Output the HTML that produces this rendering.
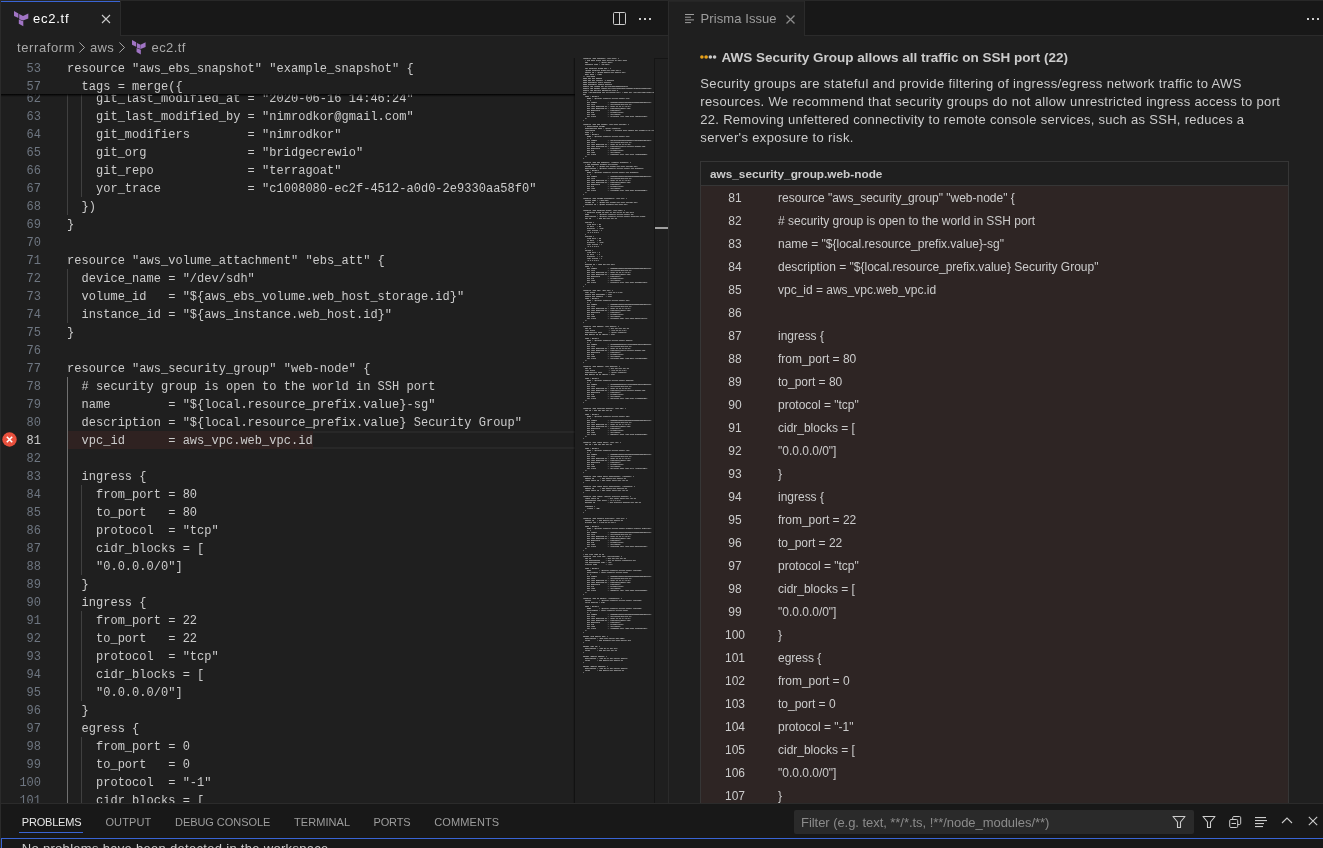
<!DOCTYPE html><html><head><meta charset="utf-8"><style>
*{box-sizing:border-box;margin:0;padding:0}
html,body{width:1323px;height:848px;overflow:hidden;background:#1f1f1f}
body{position:relative;font-family:'Liberation Sans', sans-serif;-webkit-font-smoothing:antialiased}
.a{position:absolute}
.ln{position:absolute;left:0;width:41px;text-align:right;font:12px/18px 'Liberation Mono', monospace;color:#6e7681;white-space:pre}
.cd{position:absolute;left:67.1px;font:12px/18px 'Liberation Mono', monospace;color:#cccccc;white-space:pre;letter-spacing:0.02px}
.ig{position:absolute;width:1px;background:#404040}
.tt{position:absolute;white-space:pre}
</style></head><body><div style="position:absolute;left:0;top:0;width:1323px;height:848px;will-change:transform">
<div class="a" style="left:0;top:58px;width:668px;height:745px;overflow:hidden;background:#1f1f1f">
<div class="a" style="left:67.5px;top:373px;width:507.5px;height:18px;border-top:2px solid #282828;border-bottom:2px solid #282828"></div>
<div class="a" style="left:67.5px;top:373px;width:245.5px;height:18px;background:#2f2221"></div>
<div class="ln" style="top:32px;color:#6e7681">62</div>
<div class="ig" style="left:67.0px;top:31px;height:18px;background:#404040"></div>
<div class="ig" style="left:81.4px;top:31px;height:18px;background:#404040"></div>
<div class="cd" style="top:32px">    git_last_modified_at = &quot;2020-06-16 14:46:24&quot;</div>
<div class="ln" style="top:50px;color:#6e7681">63</div>
<div class="ig" style="left:67.0px;top:49px;height:18px;background:#404040"></div>
<div class="ig" style="left:81.4px;top:49px;height:18px;background:#404040"></div>
<div class="cd" style="top:50px">    git_last_modified_by = &quot;nimrodkor@gmail.com&quot;</div>
<div class="ln" style="top:68px;color:#6e7681">64</div>
<div class="ig" style="left:67.0px;top:67px;height:18px;background:#404040"></div>
<div class="ig" style="left:81.4px;top:67px;height:18px;background:#404040"></div>
<div class="cd" style="top:68px">    git_modifiers        = &quot;nimrodkor&quot;</div>
<div class="ln" style="top:86px;color:#6e7681">65</div>
<div class="ig" style="left:67.0px;top:85px;height:18px;background:#404040"></div>
<div class="ig" style="left:81.4px;top:85px;height:18px;background:#404040"></div>
<div class="cd" style="top:86px">    git_org              = &quot;bridgecrewio&quot;</div>
<div class="ln" style="top:104px;color:#6e7681">66</div>
<div class="ig" style="left:67.0px;top:103px;height:18px;background:#404040"></div>
<div class="ig" style="left:81.4px;top:103px;height:18px;background:#404040"></div>
<div class="cd" style="top:104px">    git_repo             = &quot;terragoat&quot;</div>
<div class="ln" style="top:122px;color:#6e7681">67</div>
<div class="ig" style="left:67.0px;top:121px;height:18px;background:#404040"></div>
<div class="ig" style="left:81.4px;top:121px;height:18px;background:#404040"></div>
<div class="cd" style="top:122px">    yor_trace            = &quot;c1008080-ec2f-4512-a0d0-2e9330aa58f0&quot;</div>
<div class="ln" style="top:140px;color:#6e7681">68</div>
<div class="ig" style="left:67.0px;top:139px;height:18px;background:#404040"></div>
<div class="cd" style="top:140px">  })</div>
<div class="ln" style="top:158px;color:#6e7681">69</div>
<div class="cd" style="top:158px">}</div>
<div class="ln" style="top:176px;color:#6e7681">70</div>
<div class="cd" style="top:176px"></div>
<div class="ln" style="top:194px;color:#6e7681">71</div>
<div class="cd" style="top:194px">resource &quot;aws_volume_attachment&quot; &quot;ebs_att&quot; {</div>
<div class="ln" style="top:212px;color:#6e7681">72</div>
<div class="ig" style="left:67.0px;top:211px;height:18px;background:#404040"></div>
<div class="cd" style="top:212px">  device_name = &quot;/dev/sdh&quot;</div>
<div class="ln" style="top:230px;color:#6e7681">73</div>
<div class="ig" style="left:67.0px;top:229px;height:18px;background:#404040"></div>
<div class="cd" style="top:230px">  volume_id   = &quot;${aws_ebs_volume.web_host_storage.id}&quot;</div>
<div class="ln" style="top:248px;color:#6e7681">74</div>
<div class="ig" style="left:67.0px;top:247px;height:18px;background:#404040"></div>
<div class="cd" style="top:248px">  instance_id = &quot;${aws_instance.web_host.id}&quot;</div>
<div class="ln" style="top:266px;color:#6e7681">75</div>
<div class="cd" style="top:266px">}</div>
<div class="ln" style="top:284px;color:#6e7681">76</div>
<div class="cd" style="top:284px"></div>
<div class="ln" style="top:302px;color:#6e7681">77</div>
<div class="cd" style="top:302px">resource &quot;aws_security_group&quot; &quot;web-node&quot; {</div>
<div class="ln" style="top:320px;color:#6e7681">78</div>
<div class="ig" style="left:67.0px;top:319px;height:18px;background:#707070"></div>
<div class="cd" style="top:320px">  # security group is open to the world in SSH port</div>
<div class="ln" style="top:338px;color:#6e7681">79</div>
<div class="ig" style="left:67.0px;top:337px;height:18px;background:#707070"></div>
<div class="cd" style="top:338px">  name        = &quot;${local.resource_prefix.value}-sg&quot;</div>
<div class="ln" style="top:356px;color:#6e7681">80</div>
<div class="ig" style="left:67.0px;top:355px;height:18px;background:#707070"></div>
<div class="cd" style="top:356px">  description = &quot;${local.resource_prefix.value} Security Group&quot;</div>
<div class="ln" style="top:374px;color:#cccccc">81</div>
<div class="ig" style="left:67.0px;top:373px;height:18px;background:#707070"></div>
<div class="cd" style="top:374px">  vpc_id      = aws_vpc.web_vpc.id</div>
<div class="ln" style="top:392px;color:#6e7681">82</div>
<div class="ig" style="left:67.0px;top:391px;height:18px;background:#707070"></div>
<div class="cd" style="top:392px"></div>
<div class="ln" style="top:410px;color:#6e7681">83</div>
<div class="ig" style="left:67.0px;top:409px;height:18px;background:#707070"></div>
<div class="cd" style="top:410px">  ingress {</div>
<div class="ln" style="top:428px;color:#6e7681">84</div>
<div class="ig" style="left:67.0px;top:427px;height:18px;background:#707070"></div>
<div class="ig" style="left:81.4px;top:427px;height:18px;background:#404040"></div>
<div class="cd" style="top:428px">    from_port = 80</div>
<div class="ln" style="top:446px;color:#6e7681">85</div>
<div class="ig" style="left:67.0px;top:445px;height:18px;background:#707070"></div>
<div class="ig" style="left:81.4px;top:445px;height:18px;background:#404040"></div>
<div class="cd" style="top:446px">    to_port   = 80</div>
<div class="ln" style="top:464px;color:#6e7681">86</div>
<div class="ig" style="left:67.0px;top:463px;height:18px;background:#707070"></div>
<div class="ig" style="left:81.4px;top:463px;height:18px;background:#404040"></div>
<div class="cd" style="top:464px">    protocol  = &quot;tcp&quot;</div>
<div class="ln" style="top:482px;color:#6e7681">87</div>
<div class="ig" style="left:67.0px;top:481px;height:18px;background:#707070"></div>
<div class="ig" style="left:81.4px;top:481px;height:18px;background:#404040"></div>
<div class="cd" style="top:482px">    cidr_blocks = [</div>
<div class="ln" style="top:500px;color:#6e7681">88</div>
<div class="ig" style="left:67.0px;top:499px;height:18px;background:#707070"></div>
<div class="ig" style="left:81.4px;top:499px;height:18px;background:#404040"></div>
<div class="cd" style="top:500px">    &quot;0.0.0.0/0&quot;]</div>
<div class="ln" style="top:518px;color:#6e7681">89</div>
<div class="ig" style="left:67.0px;top:517px;height:18px;background:#707070"></div>
<div class="cd" style="top:518px">  }</div>
<div class="ln" style="top:536px;color:#6e7681">90</div>
<div class="ig" style="left:67.0px;top:535px;height:18px;background:#707070"></div>
<div class="cd" style="top:536px">  ingress {</div>
<div class="ln" style="top:554px;color:#6e7681">91</div>
<div class="ig" style="left:67.0px;top:553px;height:18px;background:#707070"></div>
<div class="ig" style="left:81.4px;top:553px;height:18px;background:#404040"></div>
<div class="cd" style="top:554px">    from_port = 22</div>
<div class="ln" style="top:572px;color:#6e7681">92</div>
<div class="ig" style="left:67.0px;top:571px;height:18px;background:#707070"></div>
<div class="ig" style="left:81.4px;top:571px;height:18px;background:#404040"></div>
<div class="cd" style="top:572px">    to_port   = 22</div>
<div class="ln" style="top:590px;color:#6e7681">93</div>
<div class="ig" style="left:67.0px;top:589px;height:18px;background:#707070"></div>
<div class="ig" style="left:81.4px;top:589px;height:18px;background:#404040"></div>
<div class="cd" style="top:590px">    protocol  = &quot;tcp&quot;</div>
<div class="ln" style="top:608px;color:#6e7681">94</div>
<div class="ig" style="left:67.0px;top:607px;height:18px;background:#707070"></div>
<div class="ig" style="left:81.4px;top:607px;height:18px;background:#404040"></div>
<div class="cd" style="top:608px">    cidr_blocks = [</div>
<div class="ln" style="top:626px;color:#6e7681">95</div>
<div class="ig" style="left:67.0px;top:625px;height:18px;background:#707070"></div>
<div class="ig" style="left:81.4px;top:625px;height:18px;background:#404040"></div>
<div class="cd" style="top:626px">    &quot;0.0.0.0/0&quot;]</div>
<div class="ln" style="top:644px;color:#6e7681">96</div>
<div class="ig" style="left:67.0px;top:643px;height:18px;background:#707070"></div>
<div class="cd" style="top:644px">  }</div>
<div class="ln" style="top:662px;color:#6e7681">97</div>
<div class="ig" style="left:67.0px;top:661px;height:18px;background:#707070"></div>
<div class="cd" style="top:662px">  egress {</div>
<div class="ln" style="top:680px;color:#6e7681">98</div>
<div class="ig" style="left:67.0px;top:679px;height:18px;background:#707070"></div>
<div class="ig" style="left:81.4px;top:679px;height:18px;background:#404040"></div>
<div class="cd" style="top:680px">    from_port = 0</div>
<div class="ln" style="top:698px;color:#6e7681">99</div>
<div class="ig" style="left:67.0px;top:697px;height:18px;background:#707070"></div>
<div class="ig" style="left:81.4px;top:697px;height:18px;background:#404040"></div>
<div class="cd" style="top:698px">    to_port   = 0</div>
<div class="ln" style="top:716px;color:#6e7681">100</div>
<div class="ig" style="left:67.0px;top:715px;height:18px;background:#707070"></div>
<div class="ig" style="left:81.4px;top:715px;height:18px;background:#404040"></div>
<div class="cd" style="top:716px">    protocol  = &quot;-1&quot;</div>
<div class="ln" style="top:734px;color:#6e7681">101</div>
<div class="ig" style="left:67.0px;top:733px;height:18px;background:#707070"></div>
<div class="ig" style="left:81.4px;top:733px;height:18px;background:#404040"></div>
<div class="cd" style="top:734px">    cidr_blocks = [</div>
<div class="a" style="left:0;top:0;width:575px;height:36px;background:#1f1f1f"></div>
<div class="ln" style="top:2px">53</div>
<div class="cd" style="top:2px">resource &quot;aws_ebs_snapshot&quot; &quot;example_snapshot&quot; {</div>
<div class="ln" style="top:20px">57</div>
<div class="cd" style="top:20px">  tags = merge({</div>
<div class="a" style="left:0;top:36px;width:575px;height:3px;background:linear-gradient(#000 0%,rgba(0,0,0,0.5) 40%,rgba(0,0,0,0) 100%)"></div>
<svg class="a" style="left:2px;top:373.5px" width="15" height="15" viewBox="0 0 15 15"><circle cx="7.5" cy="7.5" r="7.2" fill="#e8503d"/><path d="M4.8 4.8L10.2 10.2M10.2 4.8L4.8 10.2" stroke="#fff" stroke-width="1.6"/></svg>
<div class="a" style="left:573px;top:0;width:2px;height:745px;background:linear-gradient(90deg,rgba(0,0,0,0),rgba(0,0,0,0.55))"></div>
<div class="a" style="left:583px;top:0;width:71px;height:616px;overflow:hidden;white-space:pre;font:1.6667px/2px 'Liberation Mono', monospace;color:#d8d8d8;font-weight:bold">resource &quot;aws_instance&quot; &quot;web_host&quot; {
  # ec2 have plain text secrets in user data
  ami           = &quot;${var.ami}&quot;
  instance_type = &quot;t2.nano&quot;

  vpc_security_group_ids = [
  &quot;${aws_security_group.web-node.id}&quot;]
  subnet_id = &quot;${aws_subnet.web_subnet.id}&quot;
  user_data = &lt;&lt;EOF
#! /bin/bash
sudo apt-get update
sudo apt-get install -y apache2
sudo systemctl start apache2
sudo systemctl enable apache2
export AWS_ACCESS_KEY_ID=AKIAIOSFODNN7EXAMPLE
export AWS_SECRET_ACCESS_KEY=wJalrXUtnFEMI/K7MDENG/bPxRfiCYEXAMPLEKEY
export AWS_DEFAULT_REGION=us-west-2
echo &quot;&lt;h1&gt;Deployed via Terraform&lt;/h1&gt;&quot; | sudo tee /var/www/html/index.html
EOF
  tags = merge({
    Name = &quot;${local.resource_prefix.value}-ec2&quot;
    }, {
    git_commit           = &quot;d68d2897add9bc2203a5ed0632a5cdd8ff8cefb0&quot;
    git_file             = &quot;terraform/aws/ec2.tf&quot;
    git_last_modified_at = &quot;2020-06-16 14:46:24&quot;
    git_last_modified_by = &quot;nimrodkor@gmail.com&quot;
    git_modifiers        = &quot;nimrodkor&quot;
    git_org              = &quot;bridgecrewio&quot;
    git_repo             = &quot;terragoat&quot;
    yor_trace            = &quot;347af3cd-4f70-4632-aca3-4d5e30ffc0b6&quot;
  })
}

resource &quot;aws_ebs_volume&quot; &quot;web_host_storage&quot; {
  # unencrypted volume
  availability_zone = &quot;${var.region}a&quot;
  #encrypted         = false  # Setting this causes the volume to be recreated on apply
  size = 1
  tags = merge({
    Name = &quot;${local.resource_prefix.value}-ebs&quot;
    }, {
    git_commit           = &quot;d3439f0f2af62f6fa3521e14d6c27819ef8f12e1&quot;
    git_file             = &quot;terraform/aws/ec2.tf&quot;
    git_last_modified_at = &quot;2021-05-02 11:17:26&quot;
    git_last_modified_by = &quot;nimrodkor@users.noreply.github.com&quot;
    git_modifiers        = &quot;nimrodkor&quot;
    git_org              = &quot;bridgecrewio&quot;
    git_repo             = &quot;terragoat&quot;
    yor_trace            = &quot;c5509daf-10f0-46af-9e03-41989212521d&quot;
  })
}

resource &quot;aws_ebs_snapshot&quot; &quot;example_snapshot&quot; {
  # ebs snapshot without encryption
  volume_id   = &quot;${aws_ebs_volume.web_host_storage.id}&quot;
  description = &quot;${local.resource_prefix.value}-ebs-snapshot&quot;
  tags = merge({
    Name = &quot;${local.resource_prefix.value}-ebs-snapshot&quot;
    }, {
    git_commit           = &quot;d68d2897add9bc2203a5ed0632a5cdd8ff8cefb0&quot;
    git_file             = &quot;terraform/aws/ec2.tf&quot;
    git_last_modified_at = &quot;2020-06-16 14:46:24&quot;
    git_last_modified_by = &quot;nimrodkor@gmail.com&quot;
    git_modifiers        = &quot;nimrodkor&quot;
    git_org              = &quot;bridgecrewio&quot;
    git_repo             = &quot;terragoat&quot;
    yor_trace            = &quot;c1008080-ec2f-4512-a0d0-2e9330aa58f0&quot;
  })
}

resource &quot;aws_volume_attachment&quot; &quot;ebs_att&quot; {
  device_name = &quot;/dev/sdh&quot;
  volume_id   = &quot;${aws_ebs_volume.web_host_storage.id}&quot;
  instance_id = &quot;${aws_instance.web_host.id}&quot;
}

resource &quot;aws_security_group&quot; &quot;web-node&quot; {
  # security group is open to the world in SSH port
  name        = &quot;${local.resource_prefix.value}-sg&quot;
  description = &quot;${local.resource_prefix.value} Security Group&quot;
  vpc_id      = aws_vpc.web_vpc.id

  ingress {
    from_port = 80
    to_port   = 80
    protocol  = &quot;tcp&quot;
    cidr_blocks = [
    &quot;0.0.0.0/0&quot;]
  }
  ingress {
    from_port = 22
    to_port   = 22
    protocol  = &quot;tcp&quot;
    cidr_blocks = [
    &quot;0.0.0.0/0&quot;]
  }
  egress {
    from_port = 0
    to_port   = 0
    protocol  = &quot;-1&quot;
    cidr_blocks = [
    &quot;0.0.0.0/0&quot;]
  }
  depends_on = [aws_vpc.web_vpc]
  tags = {
    git_commit           = &quot;d68d2897add9bc2203a5ed0632a5cdd8ff8cefb0&quot;
    git_file             = &quot;terraform/aws/ec2.tf&quot;
    git_last_modified_at = &quot;2020-06-16 14:46:24&quot;
    git_last_modified_by = &quot;nimrodkor@gmail.com&quot;
    git_modifiers        = &quot;nimrodkor&quot;
    git_org              = &quot;bridgecrewio&quot;
    git_repo             = &quot;terragoat&quot;
    yor_trace            = &quot;b7af1b40-64eb-4519-a1a0-ab198db4b193&quot;
  }
}

resource &quot;aws_vpc&quot; &quot;web_vpc&quot; {
  cidr_block           = &quot;172.16.0.0/16&quot;
  enable_dns_hostnames = true
  enable_dns_support   = true
  tags = merge({
    Name = &quot;${local.resource_prefix.value}-vpc&quot;
    }, {
    git_commit           = &quot;d68d2897add9bc2203a5ed0632a5cdd8ff8cefb0&quot;
    git_file             = &quot;terraform/aws/ec2.tf&quot;
    git_last_modified_at = &quot;2020-06-16 14:46:24&quot;
    git_last_modified_by = &quot;nimrodkor@gmail.com&quot;
    git_modifiers        = &quot;nimrodkor&quot;
    git_org              = &quot;bridgecrewio&quot;
    git_repo             = &quot;terragoat&quot;
    yor_trace            = &quot;9bf2359b-952e-4570-9595-52eba4c20473&quot;
  })
}

resource &quot;aws_subnet&quot; &quot;web_subnet&quot; {
  vpc_id                  = aws_vpc.web_vpc.id
  cidr_block              = &quot;172.16.10.0/24&quot;
  availability_zone       = &quot;${var.region}a&quot;
  map_public_ip_on_launch = true

  tags = merge({
    Name = &quot;${local.resource_prefix.value}-subnet&quot;
    }, {
    git_commit           = &quot;6e62522d2ab8f63740e53752b84a6e99cd65696a&quot;
    git_file             = &quot;terraform/aws/ec2.tf&quot;
    git_last_modified_at = &quot;2021-05-02 11:16:31&quot;
    git_last_modified_by = &quot;nimrodkor@users.noreply.github.com&quot;
    git_modifiers        = &quot;nimrodkor&quot;
    git_org              = &quot;bridgecrewio&quot;
    git_repo             = &quot;terragoat&quot;
    yor_trace            = &quot;0345f650-d280-4ca8-86c9-c71c38c0eda8&quot;
  })
}

resource &quot;aws_subnet&quot; &quot;web_subnet2&quot; {
  vpc_id                  = aws_vpc.web_vpc.id
  cidr_block              = &quot;172.16.11.0/24&quot;
  availability_zone       = &quot;${var.region}b&quot;
  map_public_ip_on_launch = true

  tags = merge({
    Name = &quot;${local.resource_prefix.value}-subnet2&quot;
    }, {
    git_commit           = &quot;6e62522d2ab8f63740e53752b84a6e99cd65696a&quot;
    git_file             = &quot;terraform/aws/ec2.tf&quot;
    git_last_modified_at = &quot;2021-05-02 11:16:31&quot;
    git_last_modified_by = &quot;nimrodkor@users.noreply.github.com&quot;
    git_modifiers        = &quot;nimrodkor&quot;
    git_org              = &quot;bridgecrewio&quot;
    git_repo             = &quot;terragoat&quot;
    yor_trace            = &quot;224af03a-00e0-4981-be30-14965833c2db&quot;
  })
}


resource &quot;aws_internet_gateway&quot; &quot;web_igw&quot; {
  vpc_id = aws_vpc.web_vpc.id

  tags = merge({
    Name = &quot;${local.resource_prefix.value}-igw&quot;
    }, {
    git_commit           = &quot;d68d2897add9bc2203a5ed0632a5cdd8ff8cefb0&quot;
    git_file             = &quot;terraform/aws/ec2.tf&quot;
    git_last_modified_at = &quot;2020-06-16 14:46:24&quot;
    git_last_modified_by = &quot;nimrodkor@gmail.com&quot;
    git_modifiers        = &quot;nimrodkor&quot;
    git_org              = &quot;bridgecrewio&quot;
    git_repo             = &quot;terragoat&quot;
    yor_trace            = &quot;d8e63cb4-2fb5-4726-9bf8-5c3abae6f6d2&quot;
  })
}

resource &quot;aws_route_table&quot; &quot;web_rtb&quot; {
  vpc_id = aws_vpc.web_vpc.id

  tags = merge({
    Name = &quot;${local.resource_prefix.value}-rtb&quot;
    }, {
    git_commit           = &quot;d68d2897add9bc2203a5ed0632a5cdd8ff8cefb0&quot;
    git_file             = &quot;terraform/aws/ec2.tf&quot;
    git_last_modified_at = &quot;2020-06-16 14:46:24&quot;
    git_last_modified_by = &quot;nimrodkor@gmail.com&quot;
    git_modifiers        = &quot;nimrodkor&quot;
    git_org              = &quot;bridgecrewio&quot;
    git_repo             = &quot;terragoat&quot;
    yor_trace            = &quot;5e4fee6e-a6aa-4b61-a741-47c5efb463e1&quot;
  })
}

resource &quot;aws_route_table_association&quot; &quot;rtbassoc&quot; {
  subnet_id      = aws_subnet.web_subnet.id
  route_table_id = aws_route_table.web_rtb.id
}

resource &quot;aws_route_table_association&quot; &quot;rtbassoc2&quot; {
  subnet_id      = aws_subnet.web_subnet2.id
  route_table_id = aws_route_table.web_rtb.id
}

resource &quot;aws_route&quot; &quot;public_internet_gateway&quot; {
  route_table_id         = aws_route_table.web_rtb.id
  destination_cidr_block = &quot;0.0.0.0/0&quot;
  gateway_id             = aws_internet_gateway.web_igw.id

  timeouts {
    create = &quot;5m&quot;
  }
}


resource &quot;aws_network_interface&quot; &quot;web-eni&quot; {
  subnet_id   = aws_subnet.web_subnet.id
  private_ips = [&quot;172.16.10.100&quot;]

  tags = merge({
    Name = &quot;${local.resource_prefix.value}-primary_network_interface&quot;
    }, {
    git_commit           = &quot;d68d2897add9bc2203a5ed0632a5cdd8ff8cefb0&quot;
    git_file             = &quot;terraform/aws/ec2.tf&quot;
    git_last_modified_at = &quot;2020-06-16 14:46:24&quot;
    git_last_modified_by = &quot;nimrodkor@gmail.com&quot;
    git_modifiers        = &quot;nimrodkor&quot;
    git_org              = &quot;bridgecrewio&quot;
    git_repo             = &quot;terragoat&quot;
    yor_trace            = &quot;7e2ffea8-739f-467d-b57b-53cbc0d7ccbe&quot;
  })
}

# VPC Flow Logs to S3
resource &quot;aws_flow_log&quot; &quot;vpcflowlogs&quot; {
  vpc_id               = aws_vpc.web_vpc.id
  log_destination      = aws_s3_bucket.flowbucket.arn
  log_destination_type = &quot;s3&quot;
  traffic_type         = &quot;ALL&quot;

  tags = merge({
    Name        = &quot;${local.resource_prefix.value}-flowlogs&quot;
    Environment = local.resource_prefix.value
    }, {
    git_commit           = &quot;d68d2897add9bc2203a5ed0632a5cdd8ff8cefb0&quot;
    git_file             = &quot;terraform/aws/ec2.tf&quot;
    git_last_modified_at = &quot;2020-06-16 14:46:24&quot;
    git_last_modified_by = &quot;nimrodkor@gmail.com&quot;
    git_modifiers        = &quot;nimrodkor&quot;
    git_org              = &quot;bridgecrewio&quot;
    git_repo             = &quot;terragoat&quot;
    yor_trace            = &quot;6808d4b7-45bc-4d1d-9523-96757a3add3a&quot;
  })
}

resource &quot;aws_s3_bucket&quot; &quot;flowbucket&quot; {
  bucket        = &quot;${local.resource_prefix.value}-flowlogs&quot;
  force_destroy = true

  tags = merge({
    Name        = &quot;${local.resource_prefix.value}-flowlogs&quot;
    Environment = local.resource_prefix.value
    }, {
    git_commit           = &quot;d68d2897add9bc2203a5ed0632a5cdd8ff8cefb0&quot;
    git_file             = &quot;terraform/aws/ec2.tf&quot;
    git_last_modified_at = &quot;2020-06-16 14:46:24&quot;
    git_last_modified_by = &quot;nimrodkor@gmail.com&quot;
    git_modifiers        = &quot;nimrodkor&quot;
    git_org              = &quot;bridgecrewio&quot;
    git_repo             = &quot;terragoat&quot;
    yor_trace            = &quot;f058838a-b1e0-4383-b965-7e06e987ffb1&quot;
  })
}

output &quot;ec2_public_dns&quot; {
  description = &quot;Web Host Public DNS name&quot;
  value       = aws_instance.web_host.public_dns
}

output &quot;vpc_id&quot; {
  description = &quot;The ID of the VPC&quot;
  value       = aws_vpc.web_vpc.id
}

output &quot;public_subnet&quot; {
  description = &quot;The ID of the Public subnet&quot;
  value       = aws_subnet.web_subnet.id
}

output &quot;public_subnet2&quot; {
  description = &quot;The ID of the Public subnet&quot;
  value       = aws_subnet.web_subnet2.id
}</div>
<div class="a" style="left:654px;top:0;width:1px;height:745px;background:#151515"></div>
<div class="a" style="left:654px;top:0;width:14px;height:1px;background:#151515"></div>
<div class="a" style="left:655px;top:169px;width:13px;height:2px;background:#a0a0a0"></div>
</div>
<div style="position:absolute;left:0px;top:0px;width:668px;height:36px;background:#181818;"></div>
<div style="position:absolute;left:0px;top:35px;width:668px;height:1px;background:#2b2b2b;"></div>
<div style="position:absolute;left:0px;top:1px;width:120px;height:35px;background:#1f1f1f;"></div>
<div style="position:absolute;left:0px;top:1px;width:120px;height:1px;background:#3964d4;"></div>
<div style="position:absolute;left:120px;top:1px;width:1px;height:35px;background:#2b2b2b;"></div>
<svg class="a" style="left:13.7px;top:10.8px" width="15" height="16" fill="#a074c4"><path d="M0 0L4.4 2.4V7.1L0 4.9Z"/><path d="M5.2 3.1L9 5V9.6L5.2 8.2Z"/><path d="M9 5L14.3 2.4V7.4L9 9.6Z"/><path d="M4.8 8.5L9.3 10.2V15.3L4.8 12.7Z"/></svg>
<div class="tt" style="left:33px;top:10px;font:13px/18px 'Liberation Sans', sans-serif;color:#ffffff;letter-spacing:0.75px">ec2.tf</div>
<svg class="a" style="left:101px;top:14px" width="10" height="10" viewBox="0 0 10 10"><path d="M1 1L9 9M9 1L1 9" stroke="#cccccc" stroke-width="1.1"/></svg>
<svg class="a" style="left:612px;top:11px" width="16" height="16" viewBox="0 0 16 16"><rect x="1.5" y="1.5" width="12" height="12" rx="1" fill="none" stroke="#cccccc" stroke-width="1"/><path d="M7.5 1.5V13.5" stroke="#cccccc" stroke-width="1"/></svg>
<div style="position:absolute;left:639px;top:18px;width:2px;height:2px;background:#cccccc;"></div>
<div style="position:absolute;left:644px;top:18px;width:2px;height:2px;background:#cccccc;"></div>
<div style="position:absolute;left:649px;top:18px;width:2px;height:2px;background:#cccccc;"></div>
<div class="tt" style="left:17px;top:39px;font:13px/18px 'Liberation Sans', sans-serif;color:#a9a9a9;letter-spacing:0.6px">terraform</div>
<div class="tt" style="left:90px;top:39px;font:13px/18px 'Liberation Sans', sans-serif;color:#a9a9a9;letter-spacing:0.37px">aws</div>
<svg class="a" style="left:79px;top:41.5px" width="7" height="12" viewBox="0 0 7 12"><path d="M0.4 0.5L5.5 5.5L0.4 10.5" fill="none" stroke="#a9a9a9" stroke-width="1"/></svg>
<svg class="a" style="left:119px;top:41.5px" width="7" height="12" viewBox="0 0 7 12"><path d="M0.4 0.5L5.5 5.5L0.4 10.5" fill="none" stroke="#a9a9a9" stroke-width="1"/></svg>
<svg class="a" style="left:131.8px;top:39.5px;transform:scale(0.95);transform-origin:0 0" width="15" height="16" fill="#a074c4"><path d="M0 0L4.4 2.4V7.1L0 4.9Z"/><path d="M5.2 3.1L9 5V9.6L5.2 8.2Z"/><path d="M9 5L14.3 2.4V7.4L9 9.6Z"/><path d="M4.8 8.5L9.3 10.2V15.3L4.8 12.7Z"/></svg>
<div class="tt" style="left:151.6px;top:39px;font:13px/18px 'Liberation Sans', sans-serif;color:#a9a9a9;letter-spacing:0.37px">ec2.tf</div>
<div style="position:absolute;left:668px;top:0px;width:1px;height:803px;background:#2b2b2b;"></div>
<div style="position:absolute;left:669px;top:0px;width:654px;height:36px;background:#181818;"></div>
<div style="position:absolute;left:669px;top:35px;width:654px;height:1px;background:#2b2b2b;"></div>
<div style="position:absolute;left:669px;top:1px;width:136px;height:35px;background:#1f1f1f;"></div>
<div style="position:absolute;left:669px;top:1px;width:136px;height:1px;background:#252525;"></div>
<div style="position:absolute;left:804px;top:1px;width:1px;height:35px;background:#2b2b2b;"></div>
<svg class="a" style="left:685px;top:13px" width="10" height="11" viewBox="0 0 10 11" fill="#9d9d9d"><rect x="0" y="1" width="9" height="1"/><rect x="0" y="3.7" width="6" height="1"/><rect x="0" y="6.4" width="9" height="1"/><rect x="0" y="9.1" width="6" height="1"/></svg>
<div class="tt" style="left:700.6px;top:10px;font:13px/18px 'Liberation Sans', sans-serif;color:#9d9d9d;letter-spacing:0.08px">Prisma Issue</div>
<svg class="a" style="left:786px;top:14.5px" width="9" height="9" viewBox="0 0 9 9"><path d="M0.5 0.5L8.5 8.5M8.5 0.5L0.5 8.5" stroke="#8c8c8c" stroke-width="1.25"/></svg>
<div style="position:absolute;left:1307px;top:18px;width:2px;height:2px;background:#cccccc;"></div>
<div style="position:absolute;left:1312px;top:18px;width:2px;height:2px;background:#cccccc;"></div>
<div style="position:absolute;left:1317px;top:18px;width:2px;height:2px;background:#cccccc;"></div>
<svg class="a" style="left:699.8px;top:54.9px" width="20" height="4"><circle cx="1.90" cy="2" r="1.8" fill="#e9a21a"/><circle cx="6.13" cy="2" r="1.8" fill="#e9a21a"/><circle cx="10.36" cy="2" r="1.8" fill="#c8c8c8"/><circle cx="14.59" cy="2" r="1.8" fill="#c8c8c8"/></svg>
<div class="tt" style="left:721.5px;top:49.2px;font:bold 13.5px/18px 'Liberation Sans', sans-serif;color:#cccccc">AWS Security Group allows all traffic on SSH port (22)</div>
<div class="tt" style="left:700.3px;top:75px;font:13px/18px 'Liberation Sans', sans-serif;color:#cccccc;letter-spacing:0.36px">Security groups are stateful and provide filtering of ingress/egress network traffic to AWS</div>
<div class="tt" style="left:700.3px;top:93px;font:13px/18px 'Liberation Sans', sans-serif;color:#cccccc;letter-spacing:0.35px">resources. We recommend that security groups do not allow unrestricted ingress access to port</div>
<div class="tt" style="left:700.3px;top:111px;font:13px/18px 'Liberation Sans', sans-serif;color:#cccccc;letter-spacing:0.29px">22. Removing unfettered connectivity to remote console services, such as SSH, reduces a</div>
<div class="tt" style="left:700.3px;top:129px;font:13px/18px 'Liberation Sans', sans-serif;color:#cccccc;letter-spacing:0.36px">server&#x27;s exposure to risk.</div>
<div class="a" style="left:700px;top:161px;width:589px;height:682px;border:1px solid #363636;background:#1f1f1f"></div>
<div style="position:absolute;left:701px;top:185px;width:587px;height:1px;background:#363636;"></div>
<div style="position:absolute;left:701px;top:186px;width:587px;height:617px;background:#2e2524;"></div>
<div class="tt" style="left:710px;top:165px;font:bold 11.8px/18px 'Liberation Sans', sans-serif;color:#cccccc">aws_security_group.web-node</div>
<div class="tt" style="left:715px;width:40px;text-align:center;top:188.5px;font:12px/18px 'Liberation Sans', sans-serif;color:#cccccc">81</div>
<div class="tt" style="left:778px;top:188.5px;font:12px/18px 'Liberation Sans', sans-serif;color:#cccccc;letter-spacing:-0.01px">resource &quot;aws_security_group&quot; &quot;web-node&quot; {</div>
<div class="tt" style="left:715px;width:40px;text-align:center;top:211.5px;font:12px/18px 'Liberation Sans', sans-serif;color:#cccccc">82</div>
<div class="tt" style="left:778px;top:211.5px;font:12px/18px 'Liberation Sans', sans-serif;color:#cccccc;letter-spacing:-0.01px"># security group is open to the world in SSH port</div>
<div class="tt" style="left:715px;width:40px;text-align:center;top:234.5px;font:12px/18px 'Liberation Sans', sans-serif;color:#cccccc">83</div>
<div class="tt" style="left:778px;top:234.5px;font:12px/18px 'Liberation Sans', sans-serif;color:#cccccc;letter-spacing:-0.01px">name = &quot;${local.resource_prefix.value}-sg&quot;</div>
<div class="tt" style="left:715px;width:40px;text-align:center;top:257.5px;font:12px/18px 'Liberation Sans', sans-serif;color:#cccccc">84</div>
<div class="tt" style="left:778px;top:257.5px;font:12px/18px 'Liberation Sans', sans-serif;color:#cccccc;letter-spacing:-0.01px">description = &quot;${local.resource_prefix.value} Security Group&quot;</div>
<div class="tt" style="left:715px;width:40px;text-align:center;top:280.5px;font:12px/18px 'Liberation Sans', sans-serif;color:#cccccc">85</div>
<div class="tt" style="left:778px;top:280.5px;font:12px/18px 'Liberation Sans', sans-serif;color:#cccccc;letter-spacing:-0.01px">vpc_id = aws_vpc.web_vpc.id</div>
<div class="tt" style="left:715px;width:40px;text-align:center;top:303.5px;font:12px/18px 'Liberation Sans', sans-serif;color:#cccccc">86</div>
<div class="tt" style="left:778px;top:303.5px;font:12px/18px 'Liberation Sans', sans-serif;color:#cccccc;letter-spacing:-0.01px"></div>
<div class="tt" style="left:715px;width:40px;text-align:center;top:326.5px;font:12px/18px 'Liberation Sans', sans-serif;color:#cccccc">87</div>
<div class="tt" style="left:778px;top:326.5px;font:12px/18px 'Liberation Sans', sans-serif;color:#cccccc;letter-spacing:-0.01px">ingress {</div>
<div class="tt" style="left:715px;width:40px;text-align:center;top:349.5px;font:12px/18px 'Liberation Sans', sans-serif;color:#cccccc">88</div>
<div class="tt" style="left:778px;top:349.5px;font:12px/18px 'Liberation Sans', sans-serif;color:#cccccc;letter-spacing:-0.01px">from_port = 80</div>
<div class="tt" style="left:715px;width:40px;text-align:center;top:372.5px;font:12px/18px 'Liberation Sans', sans-serif;color:#cccccc">89</div>
<div class="tt" style="left:778px;top:372.5px;font:12px/18px 'Liberation Sans', sans-serif;color:#cccccc;letter-spacing:-0.01px">to_port = 80</div>
<div class="tt" style="left:715px;width:40px;text-align:center;top:395.5px;font:12px/18px 'Liberation Sans', sans-serif;color:#cccccc">90</div>
<div class="tt" style="left:778px;top:395.5px;font:12px/18px 'Liberation Sans', sans-serif;color:#cccccc;letter-spacing:-0.01px">protocol = &quot;tcp&quot;</div>
<div class="tt" style="left:715px;width:40px;text-align:center;top:418.5px;font:12px/18px 'Liberation Sans', sans-serif;color:#cccccc">91</div>
<div class="tt" style="left:778px;top:418.5px;font:12px/18px 'Liberation Sans', sans-serif;color:#cccccc;letter-spacing:-0.01px">cidr_blocks = [</div>
<div class="tt" style="left:715px;width:40px;text-align:center;top:441.5px;font:12px/18px 'Liberation Sans', sans-serif;color:#cccccc">92</div>
<div class="tt" style="left:778px;top:441.5px;font:12px/18px 'Liberation Sans', sans-serif;color:#cccccc;letter-spacing:-0.01px">&quot;0.0.0.0/0&quot;]</div>
<div class="tt" style="left:715px;width:40px;text-align:center;top:464.5px;font:12px/18px 'Liberation Sans', sans-serif;color:#cccccc">93</div>
<div class="tt" style="left:778px;top:464.5px;font:12px/18px 'Liberation Sans', sans-serif;color:#cccccc;letter-spacing:-0.01px">}</div>
<div class="tt" style="left:715px;width:40px;text-align:center;top:487.5px;font:12px/18px 'Liberation Sans', sans-serif;color:#cccccc">94</div>
<div class="tt" style="left:778px;top:487.5px;font:12px/18px 'Liberation Sans', sans-serif;color:#cccccc;letter-spacing:-0.01px">ingress {</div>
<div class="tt" style="left:715px;width:40px;text-align:center;top:510.5px;font:12px/18px 'Liberation Sans', sans-serif;color:#cccccc">95</div>
<div class="tt" style="left:778px;top:510.5px;font:12px/18px 'Liberation Sans', sans-serif;color:#cccccc;letter-spacing:-0.01px">from_port = 22</div>
<div class="tt" style="left:715px;width:40px;text-align:center;top:533.5px;font:12px/18px 'Liberation Sans', sans-serif;color:#cccccc">96</div>
<div class="tt" style="left:778px;top:533.5px;font:12px/18px 'Liberation Sans', sans-serif;color:#cccccc;letter-spacing:-0.01px">to_port = 22</div>
<div class="tt" style="left:715px;width:40px;text-align:center;top:556.5px;font:12px/18px 'Liberation Sans', sans-serif;color:#cccccc">97</div>
<div class="tt" style="left:778px;top:556.5px;font:12px/18px 'Liberation Sans', sans-serif;color:#cccccc;letter-spacing:-0.01px">protocol = &quot;tcp&quot;</div>
<div class="tt" style="left:715px;width:40px;text-align:center;top:579.5px;font:12px/18px 'Liberation Sans', sans-serif;color:#cccccc">98</div>
<div class="tt" style="left:778px;top:579.5px;font:12px/18px 'Liberation Sans', sans-serif;color:#cccccc;letter-spacing:-0.01px">cidr_blocks = [</div>
<div class="tt" style="left:715px;width:40px;text-align:center;top:602.5px;font:12px/18px 'Liberation Sans', sans-serif;color:#cccccc">99</div>
<div class="tt" style="left:778px;top:602.5px;font:12px/18px 'Liberation Sans', sans-serif;color:#cccccc;letter-spacing:-0.01px">&quot;0.0.0.0/0&quot;]</div>
<div class="tt" style="left:715px;width:40px;text-align:center;top:625.5px;font:12px/18px 'Liberation Sans', sans-serif;color:#cccccc">100</div>
<div class="tt" style="left:778px;top:625.5px;font:12px/18px 'Liberation Sans', sans-serif;color:#cccccc;letter-spacing:-0.01px">}</div>
<div class="tt" style="left:715px;width:40px;text-align:center;top:648.5px;font:12px/18px 'Liberation Sans', sans-serif;color:#cccccc">101</div>
<div class="tt" style="left:778px;top:648.5px;font:12px/18px 'Liberation Sans', sans-serif;color:#cccccc;letter-spacing:-0.01px">egress {</div>
<div class="tt" style="left:715px;width:40px;text-align:center;top:671.5px;font:12px/18px 'Liberation Sans', sans-serif;color:#cccccc">102</div>
<div class="tt" style="left:778px;top:671.5px;font:12px/18px 'Liberation Sans', sans-serif;color:#cccccc;letter-spacing:-0.01px">from_port = 0</div>
<div class="tt" style="left:715px;width:40px;text-align:center;top:694.5px;font:12px/18px 'Liberation Sans', sans-serif;color:#cccccc">103</div>
<div class="tt" style="left:778px;top:694.5px;font:12px/18px 'Liberation Sans', sans-serif;color:#cccccc;letter-spacing:-0.01px">to_port = 0</div>
<div class="tt" style="left:715px;width:40px;text-align:center;top:717.5px;font:12px/18px 'Liberation Sans', sans-serif;color:#cccccc">104</div>
<div class="tt" style="left:778px;top:717.5px;font:12px/18px 'Liberation Sans', sans-serif;color:#cccccc;letter-spacing:-0.01px">protocol = &quot;-1&quot;</div>
<div class="tt" style="left:715px;width:40px;text-align:center;top:740.5px;font:12px/18px 'Liberation Sans', sans-serif;color:#cccccc">105</div>
<div class="tt" style="left:778px;top:740.5px;font:12px/18px 'Liberation Sans', sans-serif;color:#cccccc;letter-spacing:-0.01px">cidr_blocks = [</div>
<div class="tt" style="left:715px;width:40px;text-align:center;top:763.5px;font:12px/18px 'Liberation Sans', sans-serif;color:#cccccc">106</div>
<div class="tt" style="left:778px;top:763.5px;font:12px/18px 'Liberation Sans', sans-serif;color:#cccccc;letter-spacing:-0.01px">&quot;0.0.0.0/0&quot;]</div>
<div class="tt" style="left:715px;width:40px;text-align:center;top:786.5px;font:12px/18px 'Liberation Sans', sans-serif;color:#cccccc">107</div>
<div class="tt" style="left:778px;top:786.5px;font:12px/18px 'Liberation Sans', sans-serif;color:#cccccc;letter-spacing:-0.01px">}</div>
<div style="position:absolute;left:0px;top:803px;width:1323px;height:45px;background:#181818;"></div>
<div style="position:absolute;left:0px;top:803px;width:1323px;height:1px;background:#2b2b2b;"></div>
<div class="tt" style="left:21.8px;top:813px;font:11px/18px 'Liberation Sans', sans-serif;color:#e7e7e7;letter-spacing:-0.2px">PROBLEMS</div>
<div class="tt" style="left:105.4px;top:813px;font:11px/18px 'Liberation Sans', sans-serif;color:#9d9d9d;letter-spacing:0.13px">OUTPUT</div>
<div class="tt" style="left:175px;top:813px;font:11px/18px 'Liberation Sans', sans-serif;color:#9d9d9d;letter-spacing:-0.05px">DEBUG CONSOLE</div>
<div class="tt" style="left:294.1px;top:813px;font:11px/18px 'Liberation Sans', sans-serif;color:#9d9d9d;letter-spacing:0.05px">TERMINAL</div>
<div class="tt" style="left:373.6px;top:813px;font:11px/18px 'Liberation Sans', sans-serif;color:#9d9d9d;letter-spacing:-0.2px">PORTS</div>
<div class="tt" style="left:434.3px;top:813px;font:11px/18px 'Liberation Sans', sans-serif;color:#9d9d9d;letter-spacing:0.1px">COMMENTS</div>
<div style="position:absolute;left:19px;top:832px;width:64px;height:1px;background:#3964d4;"></div>
<div class="a" style="left:794px;top:810px;width:400px;height:24px;background:#2a2a2a;border-radius:2px"></div>
<div class="tt" style="left:801px;top:814px;font:13px/18px 'Liberation Sans', sans-serif;color:#8b8b8b;letter-spacing:-0.05px">Filter (e.g. text, **/*.ts, !**/node_modules/**)</div>
<svg class="a" style="left:1172px;top:815px" width="14" height="14" viewBox="0 0 14 14"><path d="M1 1.5H13L8.5 7V12.5H5.5V7Z" fill="none" stroke="#cccccc" stroke-width="1.1" stroke-linejoin="round"/></svg>
<svg class="a" style="left:1202px;top:815px" width="14" height="14" viewBox="0 0 14 14"><path d="M1 1.5H13L8.5 7V12.5H5.5V7Z" fill="none" stroke="#cccccc" stroke-width="1.1" stroke-linejoin="round"/></svg>
<svg class="a" style="left:1228px;top:815px" width="14" height="14" viewBox="0 0 14 14"><rect x="4.7" y="1.5" width="8" height="8" rx="1.2" fill="none" stroke="#cccccc" stroke-width="1"/><rect x="1.7" y="4.5" width="8" height="8" rx="1.2" fill="#181818" stroke="#cccccc" stroke-width="1"/><path d="M3.5 8.5H8" stroke="#cccccc" stroke-width="1"/></svg>
<svg class="a" style="left:1255px;top:817px" width="14" height="11" viewBox="0 0 14 11" fill="#cccccc"><rect x="0" y="0" width="11" height="1.1"/><rect x="0" y="3" width="12" height="1.1"/><rect x="0" y="6" width="9" height="1.1"/><rect x="0" y="9" width="8" height="1.1"/></svg>
<svg class="a" style="left:1281px;top:816px" width="12" height="9" viewBox="0 0 12 9"><path d="M1 7L6 2L11 7" fill="none" stroke="#cccccc" stroke-width="1.1"/></svg>
<svg class="a" style="left:1308px;top:816px" width="10" height="10" viewBox="0 0 10 10"><path d="M0.8 0.8L9.2 9.2M9.2 0.8L0.8 9.2" stroke="#cccccc" stroke-width="1.1"/></svg>
<div class="a" style="left:1px;top:838px;width:1328px;height:20px;border:1px solid #3964d4"></div>
<div class="tt" style="left:21.8px;top:840px;font:13px/18px 'Liberation Sans', sans-serif;color:#cccccc;letter-spacing:0.3px">No problems have been detected in the workspace.</div>
<div style="position:absolute;left:0px;top:0px;width:1323px;height:1px;background:#282828;"></div>
<div style="position:absolute;left:0px;top:0px;width:1px;height:848px;background:#2b2b2b;"></div>
</div></body></html>
